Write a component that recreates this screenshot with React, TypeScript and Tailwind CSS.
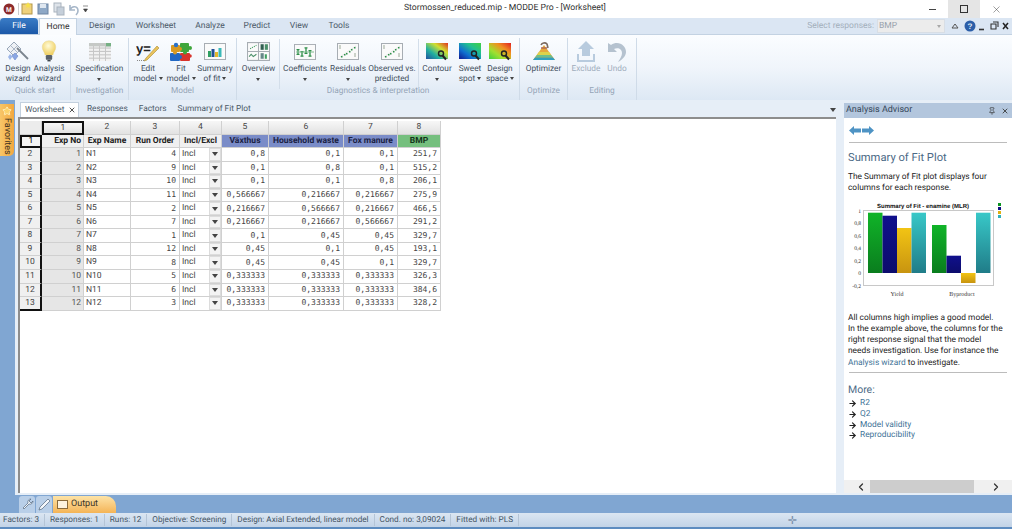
import type { ReactNode } from 'react'
import { ChevronLeft, ChevronRight, Star, X, Pin, ArrowRight } from 'lucide-react'

const FONT = "font-['Roboto',sans-serif] [text-rendering:geometricPrecision]"
const MONO = "font-['DejaVu_Sans_Mono',monospace]"

function Caret({ className = '' }: { className?: string }) {
  return <span className={`inline-block h-0 w-0 border-x-[2.5px] border-t-[3px] border-x-transparent border-t-[#444] align-middle ${className}`} />
}

/* ---------- ribbon icons ---------- */
function WizardIcon() {
  return (
    <svg width="24" height="22" viewBox="0 0 24 22">
      <path d="M8 1l7 7-7 7-7-7z" fill="#eef1f5" stroke="#98a6b8" strokeWidth="1" />
      <path d="M4.500 4.500l7 7M11.500 4.500l-7 7" stroke="#aab6c6" />
      <path d="M9 12l3 3-3 4-3-4z" fill="#8aa6e2" stroke="#6a88cc" strokeWidth=".6" />
      <path d="M4 13l2.500 2.500L4 19l-2-3z" fill="#9db6e8" />
      <path d="M11 7l11 11" stroke="#7b848e" strokeWidth="1.800" />
    </svg>
  )
}
function BulbIcon() {
  return (
    <svg width="16" height="23" viewBox="0 0 20 29">
      <defs>
        <radialGradient id="bulb" cx=".45" cy=".35" r=".7">
          <stop offset="0" stopColor="#fffbd8" />
          <stop offset="1" stopColor="#eecb55" />
        </radialGradient>
      </defs>
      <path d="M10 1c5 0 8.500 3.500 8.500 8 0 4-3 6-3.500 10H5C4.500 15 1.500 13 1.500 9 1.500 4.500 5 1 10 1z" fill="url(#bulb)" stroke="#e6d69b" strokeWidth=".6" />
      <rect x="6" y="19" width="8" height="6" rx="1.500" fill="#59616a" />
      <rect x="8" y="25" width="4" height="2" fill="#3e444b" />
    </svg>
  )
}
function SpecIcon() {
  return (
    <svg width="22" height="18" viewBox="0 0 22 16" preserveAspectRatio="none">
      <rect width="22" height="16" fill="#f2f2f2" />
      <rect width="22" height="3" fill="#c5c9c6" />
      <rect x="16" width="6" height="3" fill="#76b084" />
      {[4, 7, 10, 13].map((y) => <path key={y} d={`M0 ${y + .5}h22`} stroke="#c7c7c7" />)}
      {[4, 10, 16].map((x) => <path key={x} d={`M${x + .5} 0v16`} stroke="#c7c7c7" />)}
    </svg>
  )
}
function EditModelIcon() {
  return (
    <svg width="24" height="20" viewBox="0 0 24 20">
      <text x="0" y="11" fontSize="13" fontWeight="700" fontFamily="Liberation Sans" fill="#222">y=</text>
      <path d="M21 4L10 16l-2 3 3-1L23 6z" fill="#e9c35c" stroke="#a88a30" strokeWidth=".6" />
      <path d="M1 18.500h7" stroke="#888" strokeDasharray="1 1" />
    </svg>
  )
}
function PuzzleIcon() {
  return (
    <svg width="22" height="20" viewBox="0 0 22 20">
      <rect x="1" y="3" width="9" height="7" rx="1" fill="#d99a22" />
      <rect x="10" y="1" width="9" height="9" rx="1" fill="#3fa63c" />
      <rect x="0" y="11" width="10" height="8" rx="1" fill="#2268c4" />
      <rect x="10" y="11" width="10" height="8" rx="1" fill="#d8342c" />
      <circle cx="6" cy="3" r="2.200" fill="#2a70c8" />
      <circle cx="20" cy="6" r="2" fill="#3fa63c" />
      <circle cx="10" cy="7" r="2" fill="#d99a22" />
      <circle cx="5" cy="10.500" r="2" fill="#d99a22" />
      <circle cx="15" cy="10.500" r="2" fill="#3fa63c" />
      <circle cx="10" cy="15" r="2" fill="#2268c4" />
      <circle cx="20" cy="14" r="1.800" fill="#d8342c" />
    </svg>
  )
}
function FrameChart({ children, w = 22, h = 17 }: { children: ReactNode; w?: number; h?: number }) {
  return (
    <svg width={w} height={h} viewBox="0 0 22 17" preserveAspectRatio="none">
      <rect x=".5" y=".5" width="21" height="16" fill="#fafafa" stroke="#a7adb3" />
      {children}
    </svg>
  )
}
function SummaryIcon() {
  return (
    <FrameChart>
      <rect x="4" y="8" width="3" height="6" fill="#2f9f62" />
      <rect x="7.500" y="6" width="3" height="8" fill="#1f4f94" />
      <rect x="11" y="9" width="3" height="5" fill="#e3b72c" />
      <rect x="14.500" y="5" width="3" height="9" fill="#3bb8b8" />
    </FrameChart>
  )
}
function OverviewIcon() {
  return (
    <FrameChart w={23} h={19}>
      <path d="M11 0v17M0 8.500h22" stroke="#a7adb3" />
      <path d="M3 6l2-1 2-1 2-1" stroke="#3f9f60" strokeDasharray="1 1" />
      <rect x="13" y="2" width="3" height="5" fill="#315f50" />
      <rect x="17" y="2" width="3" height="5" fill="#4a8f68" />
      <path d="M2 13l2-2 2 2 3-2" stroke="#4a8f68" fill="none" />
      <rect x="13" y="10" width="3" height="5" fill="#668888" />
      <rect x="17" y="11" width="2" height="4" fill="#3f9f60" />
    </FrameChart>
  )
}
function CoefIcon() {
  return (
    <FrameChart h={16}>
      {[[4, 6, 11], [8, 8, 13], [12, 4, 10], [16, 7, 13]].map(([x, a, b]) => (
        <path key={x} d={`M${x} ${a}v${b - a}M${x - 1.500} ${a}h3M${x - 1.500} ${b}h3`} stroke="#2f8f4a" strokeWidth="1.300" />
      ))}
      <path d="M2 8.500h18" stroke="#7dba8c" />
    </FrameChart>
  )
}
function ScatterIcon() {
  return (
    <FrameChart>
      <path d="M3 14L19 3" stroke="#dde3dd" />
      {[[4, 13], [7, 11], [9, 10], [12, 8], [14, 6], [17, 4]].map(([x, y]) => (
        <rect key={x} x={x} y={y} width="1.500" height="1.500" fill="#2f8f4a" />
      ))}
      <rect x="2" y="2" width="2" height="4" fill="#cbd2c9" />
      <rect x="17" y="10" width="2" height="4" fill="#cbd2c9" />
    </FrameChart>
  )
}
function ContourIcon({ id, stops }: { id: string; stops: string[] }) {
  return (
    <svg width="22" height="20" viewBox="0 0 22 20">
      <defs>
        <linearGradient id={id} x1="0" y1="1" x2="1" y2="0">
          {stops.map((c, i) => <stop key={c} offset={i / (stops.length - 1)} stopColor={c} />)}
        </linearGradient>
      </defs>
      <rect y="1" width="22" height="16" fill={`url(#${id})`} />
      <circle cx="15" cy="11.500" r="2.500" fill="none" stroke="#222" strokeWidth="1.400" />
      <path d="M16.500 13.500l3.500 4" stroke="#222" strokeWidth="2" />
    </svg>
  )
}
function OptimizerIcon() {
  return (
    <svg width="24" height="20" viewBox="0 0 24 20">
      <path d="M12 3L1 18h22z" fill="#e6a83c" />
      <path d="M7 10h10l2 3H5z" fill="#ddd24a" />
      <path d="M5 13h14l2 2.500H3z" fill="#6cbf8c" />
      <path d="M3 15.500h18l2 2.500H1z" fill="#2f9fc0" />
      <path d="M9 3c1-2 4-3 6-1l1 4" stroke="#7a6a60" strokeWidth="1.600" fill="none" />
      <path d="M9 6h6" stroke="#b06a50" strokeWidth="1.500" />
    </svg>
  )
}
function ExcludeIcon() {
  return (
    <svg width="20" height="22" viewBox="0 0 20 22">
      <path d="M10 0L18 8h-4v7H6V8H2z" fill="#b8cbde" />
      <path d="M1 13v8h18v-8h-2v6H3v-6z" fill="#b8cbde" />
    </svg>
  )
}
function UndoIcon() {
  return (
    <svg width="20" height="22" viewBox="0 0 20 22">
      <path d="M1 2v9h9L7 8c4-2 8 0 8 4 0 3-2 6-4 9 4-2 8-6 8-10C19 4 11-1 4 4z" fill="#b5c2cf" />
    </svg>
  )
}

function RibbonBtn({ w, icon, lines, caret, disabled }: { w: string; icon: ReactNode; lines: string[]; caret?: 'below' | 'inline'; disabled?: boolean }) {
  return (
    <div className={`flex ${w} shrink-0 flex-col items-center ${disabled ? 'text-[#9fadbc]' : 'text-[#43505e]'}`}>
      <div className="flex h-[27px] items-center justify-center">{icon}</div>
      <div className="flex flex-col items-center text-[8.300px] leading-[9.500px]">
        {lines.map((l, i) => (
          <span key={l} className="whitespace-nowrap">
            {l}
            {caret === 'inline' && i === lines.length - 1 && <Caret className="ml-[2px]" />}
          </span>
        ))}
        {caret === 'below' && <Caret className="mt-[3px]" />}
      </div>
    </div>
  )
}

function Sep() {
  return <div className="my-[1px] h-[50px] w-px shrink-0 bg-[#d3deea]" />
}

function Group({ w, label, children, pl = '' }: { w: string; label: string; children: ReactNode; pl?: string }) {
  return (
    <div className={`flex ${w} h-full shrink-0 flex-col border-r border-[#cfdbe8]`}>
      <div className={`flex h-[48px] items-start ${pl}`}>{children}</div>
      <div className="mt-auto pb-[3px] text-center text-[8.300px] leading-[11px] text-[#95a5b6]">{label}</div>
    </div>
  )
}

function Ribbon() {
  return (
    <div className="flex h-[65px] shrink-0 bg-gradient-to-b from-[#fbfdff] via-[#f0f5fb] to-[#dde8f4] pt-[3px]">
      <Group w="w-[71px]" label="Quick start" pl="pl-[3px]">
        <RibbonBtn w="w-[30px]" icon={<WizardIcon />} lines={['Design', 'wizard']} />
        <RibbonBtn w="w-[32px]" icon={<BulbIcon />} lines={['Analysis', 'wizard']} />
      </Group>
      <Group w="w-[58px]" label="Investigation">
        <RibbonBtn w="w-[57px]" icon={<SpecIcon />} lines={['Specification']} caret="below" />
      </Group>
      <Group w="w-[108px]" label="Model" pl="pl-[2px]">
        <RibbonBtn w="w-[34px]" icon={<EditModelIcon />} lines={['Edit', 'model']} caret="inline" />
        <RibbonBtn w="w-[32px]" icon={<PuzzleIcon />} lines={['Fit', 'model']} caret="inline" />
        <RibbonBtn w="w-[36px]" icon={<SummaryIcon />} lines={['Summary', 'of fit']} caret="inline" />
      </Group>
      <Group w="w-[283px]" label="Diagnostics & interpretation" pl="pl-[1px]">
        <RibbonBtn w="w-[41px]" icon={<OverviewIcon />} lines={['Overview']} caret="below" />
        <Sep />
        <RibbonBtn w="w-[50px]" icon={<CoefIcon />} lines={['Coefficients']} caret="below" />
        <RibbonBtn w="w-[36px]" icon={<ScatterIcon />} lines={['Residuals']} caret="below" />
        <RibbonBtn w="w-[52px]" icon={<ScatterIcon />} lines={['Observed vs.', 'predicted']} />
        <Sep />
        <RibbonBtn w="w-[36px]" icon={<ContourIcon id="c1" stops={['#2050a0', '#20b0a0', '#d0e030', '#e03020']} />} lines={['Contour']} caret="below" />
        <RibbonBtn w="w-[30px]" icon={<ContourIcon id="c2" stops={['#101890', '#1070d0', '#20c090', '#40d040']} />} lines={['Sweet', 'spot']} caret="inline" />
        <RibbonBtn w="w-[30px]" icon={<ContourIcon id="c3" stops={['#40d040', '#a0e030', '#f09020', '#e02020']} />} lines={['Design', 'space']} caret="inline" />
      </Group>
      <Group w="w-[48px]" label="Optimize">
        <RibbonBtn w="w-[47px]" icon={<OptimizerIcon />} lines={['Optimizer']} />
      </Group>
      <Group w="w-[69px]" label="Editing" pl="pl-[2px]">
        <RibbonBtn w="w-[32px]" icon={<ExcludeIcon />} lines={['Exclude']} disabled />
        <RibbonBtn w="w-[30px]" icon={<UndoIcon />} lines={['Undo']} disabled />
      </Group>
    </div>
  )
}

function TitleBar() {
  return (
    <div className="relative flex h-[18px] shrink-0 items-center bg-white pl-[2px]">
      <svg width="90" height="16" viewBox="0 0 90 16" className="shrink-0">
        <circle cx="7" cy="8" r="5.500" fill="#8e2b2b" />
        <text x="7" y="10.500" textAnchor="middle" fontSize="7" fontWeight="700" fill="#fff" fontFamily="Liberation Sans">M</text>
        <path d="M16.500 2v12" stroke="#ccc" />
        <rect x="20" y="3" width="10" height="10" fill="#efd27c" stroke="#b2964b" />
        <path d="M26 1l1 2 2 .5-1.500 1.500.5 2-2-1-2 1 .5-2L23 3.500l2-.5z" fill="#f6e04a" />
        <rect x="36" y="3" width="10" height="10" fill="#8ea8c6" stroke="#6d85a3" />
        <rect x="38" y="3" width="6" height="4" fill="#dfe7f0" />
        <rect x="52" y="2" width="7" height="9" fill="#dfe4ea" stroke="#a9b3be" />
        <rect x="55" y="6" width="7" height="8" fill="#c5cfda" stroke="#a9b3be" />
        <path d="M68 4v5h5M68 9c2-5 8-4 8 1 0 2-1 3-2 4" stroke="#a6b6c8" strokeWidth="1.600" fill="none" />
        <path d="M81 5h5M81.500 8h4l-2 3z" fill="#444" stroke="#444" strokeWidth=".6" />
      </svg>
      <div className="absolute left-[404px] top-[1px] text-[8.650px] leading-[14px] whitespace-nowrap text-[#333]">Stormossen_reduced.mip - MODDE Pro - [Worksheet]</div>
      <div className="ml-auto flex h-full items-stretch">
        <div className="flex w-[32px] items-center justify-center"><div className="mt-[1px] h-[1.500px] w-[7px] bg-[#444]" /></div>
        <div className="flex w-[32px] items-center justify-center bg-[#e5e5e5]"><div className="size-[8px] border border-[#333]" /></div>
        <div className="flex w-[32px] items-center justify-center"><X size={11} strokeWidth={1} className="text-[#333]" /></div>
      </div>
    </div>
  )
}

function TabRow() {
  const tabs: [string, string][] = [['Design', 'w-[50px]'], ['Worksheet', 'w-[58px]'], ['Analyze', 'w-[50px]'], ['Predict', 'w-[44px]'], ['View', 'w-[40px]'], ['Tools', 'w-[40px]']]
  return (
    <div className="flex h-[17px] shrink-0 items-stretch border-b border-[#c3d2e2] bg-[#dbe6f3] text-[8.500px] text-[#4b5a69]">
      <div className="flex w-[38px] items-center justify-center rounded-t-sm bg-gradient-to-b from-[#3a7cc6] to-[#1c59a8] text-white">File</div>
      <div className="ml-px flex w-[38px] items-center justify-center border-x border-t border-[#c3d2e2] bg-[#fafcfe] text-[#333] mb-[-1px]">Home</div>
      {tabs.map(([t, w]) => (
        <div key={t} className={`flex ${w} items-center justify-center`}>{t}</div>
      ))}
      <div className="ml-auto flex items-center pr-[1px]">
        <span className="mr-[3px] text-[8.500px] text-[#a3afbb]">Select responses:</span>
        <div className="flex h-[14px] w-[68px] items-center justify-between border border-[#d8dee5] bg-[#ececec] pl-[1px] pr-[3px] text-[#9aa3ac]">
          BMP<Caret className="opacity-40" />
        </div>
        <svg width="65" height="14" viewBox="0 0 65 14" className="ml-[1px]">
          <path d="M6 9l3-4 3 4z" fill="none" stroke="#555" />
          <circle cx="24" cy="7" r="5.500" fill="#2b5ea8" />
          <text x="24" y="10" textAnchor="middle" fontSize="8" fontWeight="700" fill="#dfe8f5" fontFamily="Liberation Sans">?</text>
          <path d="M33 10.500h5" stroke="#333" strokeWidth="1.600" />
          <path d="M45 5h5v5h-5zM47 3h5v5" fill="none" stroke="#333" strokeWidth="1.100" />
          <path d="M57 4l5 6M62 4l-5 6" stroke="#222" strokeWidth="1.500" />
        </svg>
      </div>
    </div>
  )
}

/* ---------- worksheet ---------- */
type Row = [number, string, number, string, string, string, string]
const ROWS: Row[] = [
  [1, 'N1', 4, '0,8', '0,1', '0,1', '251,7'],
  [2, 'N2', 9, '0,1', '0,8', '0,1', '515,2'],
  [3, 'N3', 10, '0,1', '0,1', '0,8', '206,1'],
  [4, 'N4', 11, '0,566667', '0,216667', '0,216667', '275,9'],
  [5, 'N5', 2, '0,216667', '0,566667', '0,216667', '466,5'],
  [6, 'N6', 7, '0,216667', '0,216667', '0,566667', '291,2'],
  [7, 'N7', 1, '0,1', '0,45', '0,45', '329,7'],
  [8, 'N8', 12, '0,45', '0,1', '0,45', '193,1'],
  [9, 'N9', 8, '0,45', '0,45', '0,1', '329,7'],
  [10, 'N10', 5, '0,333333', '0,333333', '0,333333', '326,3'],
  [11, 'N11', 6, '0,333333', '0,333333', '0,333333', '384,6'],
  [12, 'N12', 3, '0,333333', '0,333333', '0,333333', '328,2'],
]
const HEADS: [string, string][] = [
  ['Exp No', 'bg-[#f0f0f0] justify-end text-[#222]'],
  ['Exp Name', 'bg-[#f0f0f0] justify-center text-[#222]'],
  ['Run Order', 'bg-[#f0f0f0] justify-center text-[#222]'],
  ['Incl/Excl', 'bg-[#f0f0f0] justify-center text-[#222]'],
  ['Växthus', 'bg-[#7a8cc8] justify-center text-[#1a2244]'],
  ['Household waste', 'bg-[#7a8cc8] justify-center text-[#1a2244]'],
  ['Fox manure', 'bg-[#7a8cc8] justify-center text-[#1a2244]'],
  ['BMP', 'bg-[#75bf7e] justify-center text-[#14341a]'],
]
const CELL = 'flex items-center border-r border-b border-[#d0d0d0] px-[2px] text-[8.500px] leading-none overflow-hidden whitespace-nowrap'
const NUM = `${CELL} ${MONO} justify-end text-[8px] text-[#444] pr-[3px]`

function Worksheet() {
  return (
    <div className="grid w-fit grid-cols-[22px_42px_47px_49px_42px_47px_75px_54px_43px] auto-rows-[13.550px]">
      <div className={`${CELL} bg-[#ececec]`} />
      {[1, 2, 3, 4, 5, 6, 7, 8].map((n) => (
        <div key={n} className={`${CELL} justify-center bg-gradient-to-b from-[#f7f7f7] to-[#e2e2e2] text-[#444] ${n === 1 ? 'border-2! border-[#111]!' : ''}`}>{n}</div>
      ))}
      <div className={`${CELL} justify-center border-2! border-[#111]! bg-[#f4f4f4]`}>1</div>
      {HEADS.map(([h, c]) => (
        <div key={h} className={`${CELL} ${c} font-bold`}>{h}</div>
      ))}
      {ROWS.map((r, i) => (
        <div key={r[0]} className="contents">
          <div className={`${CELL} justify-center border-r-2! border-r-[#111]! bg-[#f0f0f0] text-[#444] ${i === ROWS.length - 1 ? 'border-b-2! border-b-[#111]!' : ''}`}>{i + 2}</div>
          <div className={`${CELL} justify-end bg-[#e6e6e6] text-[#555]`}>{r[0]}</div>
          <div className={`${CELL} text-[#444]`}>{r[1]}</div>
          <div className={`${NUM}`}>{r[2]}</div>
          <div className={`${CELL} justify-between pr-0 text-[#444]`}>
            <span>Incl</span>
            <span className="flex h-full w-[12px] items-center justify-center border border-[#dcdcdc] bg-[#f3f3f3]"><Caret className="border-x-[3px] border-t-[4px] border-t-[#111]" /></span>
          </div>
          <div className={NUM}>{r[3]}</div>
          <div className={NUM}>{r[4]}</div>
          <div className={NUM}>{r[5]}</div>
          <div className={NUM}>{r[6]}</div>
        </div>
      ))}
    </div>
  )
}

function DocTabs() {
  return (
    <div className="flex h-[17px] shrink-0 items-end pl-[2px] text-[8.300px] text-[#4c5a68]">
      <div className="flex h-[15px] w-[59px] items-center justify-between border-x border-t border-[#c3d0de] bg-white pl-[4px] pr-[2px]">
        Worksheet<X size={8} strokeWidth={2.500} className="text-[#333]" />
      </div>
      <span className="ml-[8px] h-[15px] leading-[15px]">Responses</span>
      <span className="ml-[11px] h-[15px] leading-[15px]">Factors</span>
      <span className="ml-[11px] h-[15px] leading-[15px]">Summary of Fit Plot</span>
      <Caret className="mb-[5px] ml-auto border-x-[3px] border-t-[4px] border-t-[#222]" />
    </div>
  )
}

/* ---------- advisor chart ---------- */
function FitChart() {
  const ticks: [string, number][] = [['1', 210.7], ['0,8', 223], ['0,6', 236], ['0,4', 248], ['0,2', 260.7], ['0', 273], ['-0,2', 285.7]]
  const bars: [number, number, number, string][] = [
    [868, 14.500, 212.700, 'g'], [882.500, 14.500, 215.700, 'n'], [897, 14.500, 228, 'y'], [911.500, 14.500, 212.700, 't'],
    [932, 14.500, 225, 'g'], [946.500, 14.500, 255.700, 'n'], [976, 14.500, 212.700, 't'],
  ]
  return (
    <svg width="166" height="98" viewBox="845 200 166 98" className="block shrink-0">
      <defs>
        <linearGradient id="g" x1="0" y1="0" x2="0" y2="1"><stop offset="0" stopColor="#10b428" /><stop offset="1" stopColor="#0a7d1e" /></linearGradient>
        <linearGradient id="n" x1="0" y1="0" x2="0" y2="1"><stop offset="0" stopColor="#10108c" /><stop offset="1" stopColor="#0c0c6c" /></linearGradient>
        <linearGradient id="y" x1="0" y1="0" x2="0" y2="1"><stop offset="0" stopColor="#f2c414" /><stop offset="1" stopColor="#c89410" /></linearGradient>
        <linearGradient id="t" x1="0" y1="0" x2="0" y2="1"><stop offset="0" stopColor="#38c8c8" /><stop offset="1" stopColor="#207c88" /></linearGradient>
      </defs>
      <text x="923" y="207.500" textAnchor="middle" fontSize="6" fontWeight="700" fontFamily="Liberation Sans" fill="#111">Summary of Fit - enamine (MLR)</text>
      <rect x="863.500" y="210.500" width="130" height="75" fill="#fff" stroke="#c8c8c8" />
      {ticks.map(([l, y]) => (
        <text key={l} x="861" y={y + 2} textAnchor="end" fontSize="5.500" fontFamily="Liberation Serif" fill="#333">{l}</text>
      ))}
      {bars.map(([x, w, top, id]) => (
        <rect key={x} x={x} y={top} width={w} height={273 - top} fill={`url(#${id})`} />
      ))}
      <rect x="961" y="273" width="14.500" height="10" fill="url(#y)" />
      <text x="897" y="295.500" textAnchor="middle" fontSize="6" fontFamily="Liberation Serif" fill="#333">Yield</text>
      <text x="962" y="295.500" textAnchor="middle" fontSize="6" fontFamily="Liberation Serif" fill="#333">Byproduct</text>
      {['#0a9420', '#101080', '#e0b010', '#30b0b8'].map((c, i) => (
        <rect key={c} x="998" y={203 + i * 4} width="3" height="3" fill={c} />
      ))}
    </svg>
  )
}

function Advisor() {
  return (
    <div className="mt-[3px] flex h-[calc(100%-5px)] w-[170px] shrink-0 flex-col border-l-2 border-[#e6eef7] bg-white">
      <div className="flex h-[15px] shrink-0 items-center justify-between bg-[#b3c6dd] pl-[2px] pr-[3px] text-[9px] text-[#37485a]">
        Analysis Advisor
        <span className="flex items-center gap-[5px]">
          <Pin size={8} className="text-[#333]" />
          <X size={8} strokeWidth={2.500} className="text-[#333]" />
        </span>
      </div>
      <div className="flex min-h-0 flex-1 flex-col">
        <div className="flex items-center gap-[1px] px-[5px] pt-[8px]">
          {[0, 1].map((i) => (
            <svg key={i} width="12" height="9" viewBox="0 0 12 9" className={i === 0 ? '' : 'scale-x-[-1]'}>
              <path d="M0 4.500L5 0v2.500h7v4H5V9z" fill="#4e93c4" />
            </svg>
          ))}
        </div>
        <div className="mx-[5px] mt-[7px] border-t border-[#bcbcbc]" />
        <div className="mt-[6px] px-[4px] text-[11.200px] leading-[17px] whitespace-nowrap text-[#4c6a86]">Summary of Fit Plot</div>
        <p className="mt-[6px] w-[166px] px-[4px] text-[8.350px] leading-[11.300px] text-[#222]">The Summary of Fit plot displays four columns for each response.</p>
        <div className="mt-[5px] ml-px"><FitChart /></div>
        <p className="mt-[15px] px-[4px] text-[8.350px] leading-[11.300px] whitespace-nowrap text-[#222]">
          All columns high implies a good model.<br />
          In the example above, the columns for the<br />
          right response signal that the model<br />
          needs investigation. Use for instance the<br />
          <span className="text-[#3d7296]">Analysis wizard</span> to investigate.
        </p>
        <div className="mx-[5px] mt-[3px] border-t border-[#bcbcbc]" />
        <div className="mt-[10px] px-[4px] text-[10.500px] leading-[14px] text-[#4c6a86]">More:</div>
        <div className="mt-[1px] px-[4px] text-[8.350px] leading-[10.800px] text-[#3d7296]">
          {['R2', 'Q2', 'Model validity', 'Reproducibility'].map((l) => (
            <div key={l} className="flex items-center gap-[3px]">
              <ArrowRight size={9} strokeWidth={3} className="text-[#222]" />{l}
            </div>
          ))}
        </div>
        <div className="mt-auto flex h-[13px] shrink-0 items-center justify-between bg-[#f0f0f0] pl-[11px] pr-[10px]">
          <ChevronLeft size={12} strokeWidth={2.500} className="text-[#333]" />
          <div className="mr-[16px] ml-[3px] h-full flex-1 bg-[#cdcdcd]" />
          <ChevronRight size={12} strokeWidth={2.500} className="text-[#333]" />
        </div>
      </div>
    </div>
  )
}

function BottomTabs() {
  return (
    <div className="flex h-[18px] shrink-0 items-end bg-[#80a6d2] pl-[19px]">
      {[0, 1].map((i) => (
        <div key={i} className="mr-px flex h-[17px] w-[16px] items-center justify-center rounded-t-[3px] bg-[#b9cfe8]">
          <svg width="13" height="13" viewBox="0 0 13 13">
            {i === 0
              ? <path d="M12 3a3 3 0 0 1-4 3L3 11 2 10l5-5a3 3 0 0 1 3-4L8 3l2 2z" fill="#f3f6fa" stroke="#52677e" strokeWidth=".7" />
              : <path d="M10 1l2 2-8 8-3 1 1-3z" fill="#f3f6fa" stroke="#52677e" strokeWidth=".7" />}
          </svg>
        </div>
      ))}
      <div className="flex h-[17px] w-[63px] items-center gap-[3px] rounded-tr-[10px] bg-gradient-to-b from-[#fde3a6] to-[#f4b455] pl-[4px] text-[9px] text-[#3a3226]">
        <span className="h-[9px] w-[11px] border border-[#8a6a3a] bg-[#fdf2dd]" />Output
      </div>
    </div>
  )
}

function StatusBar() {
  const items = ['Factors: 3', 'Responses: 1', 'Runs: 12', 'Objective: Screening', 'Design: Axial Extended, linear model', 'Cond. no: 3,09024', 'Fitted with: PLS']
  return (
    <div className="flex h-[16px] shrink-0 items-center border-b-2 border-[#5d8cc0] bg-gradient-to-b from-[#dbe6f2] to-[#c2d3e7] text-[8.200px] text-[#445465]">
      {items.map((t) => (
        <span key={t} className="whitespace-nowrap border-r border-[#b4c4d6] px-[5px] first:pl-[3px]">{t}</span>
      ))}
      <span className="ml-auto mr-[215px] text-[11px] leading-none text-[#7d93ac]">✛</span>
    </div>
  )
}

export default function App() {
  return (
    <div className={`${FONT} h-[529px] w-[1024px] overflow-hidden bg-white`}>
      <div className="flex h-full w-[1012px] flex-col">
        <TitleBar />
        <TabRow />
        <Ribbon />
        <div className="flex min-h-0 flex-1 bg-[#80a6d2]">
          <div className="flex h-full w-[15px] shrink-0 flex-col pt-[4px]">
            <div className="flex h-[52px] w-[14px] flex-col items-center rounded-br-[5px] bg-gradient-to-r from-[#f8c668] to-[#f2a83e] pt-[2px]">
              <Star size={10} className="text-[#fff3c4]" fill="#fbd26a" />
              <span className="mt-[2px] text-[9px] leading-[12px] text-[#3c3122] [writing-mode:vertical-rl]">Favorites</span>
            </div>
          </div>
          <div className="flex h-full min-w-0 flex-1 bg-[#e6eef7] pl-[3px]">
            <div className="flex min-w-0 flex-1 flex-col pb-[2px]">
              <DocTabs />
              <div className="flex-1 border-t-2 border-l-2 border-[#8d8d8d] bg-white pl-0 pt-[2px]">
                <Worksheet />
              </div>
            </div>
            <div className="w-[6px] shrink-0" />
            <Advisor />
          </div>
        </div>
        <BottomTabs />
        <StatusBar />
      </div>
    </div>
  )
}
